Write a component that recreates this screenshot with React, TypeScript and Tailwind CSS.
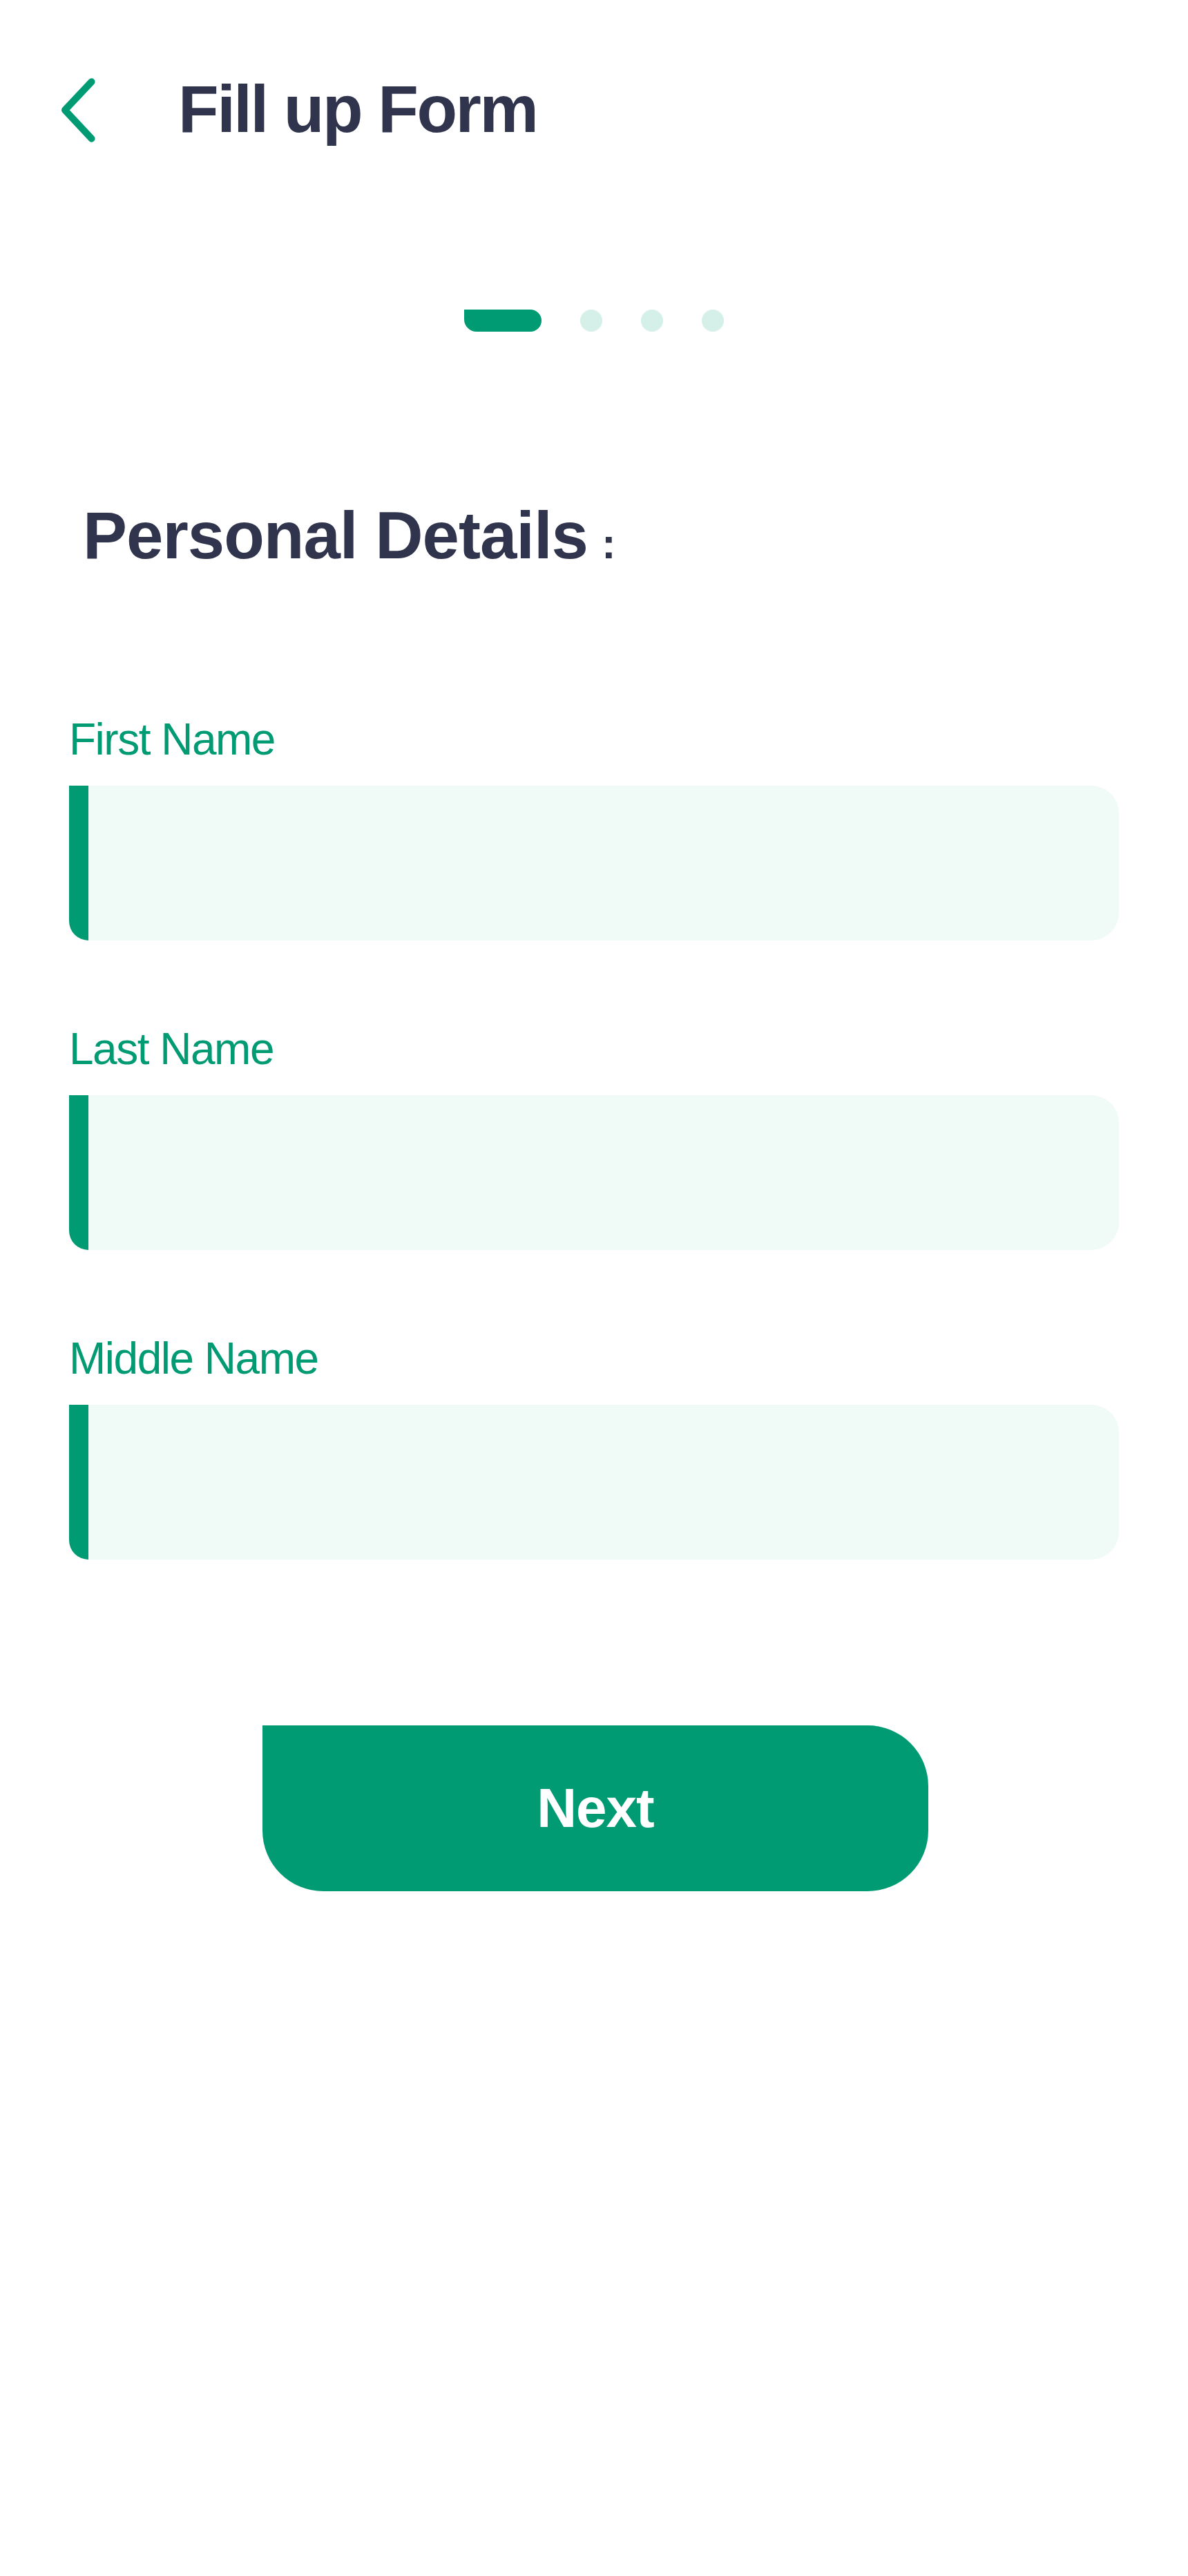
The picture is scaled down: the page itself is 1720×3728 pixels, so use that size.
import React from "react";

// 입력 필드 목록
const fields = ["First Name", "Last Name", "Middle Name"];

const BackIcon = () => (
  <svg width="60" height="96" viewBox="0 0 60 96" fill="none" className="shrink-0">
    <path
      d="M52.6 8.3 L14 49.3 L52.6 90.7"
      stroke="#009B73"
      strokeWidth="10"
      strokeLinecap="round"
      strokeLinejoin="round"
    />
  </svg>
);

const Field = ({ label }: { label: string }) => (
  <div className="flex flex-col">
    <span className="text-[64px] leading-none tracking-[-1.5px] text-[#009B73]">{label}</span>
    <div className="mt-[35px] h-[224px] flex overflow-hidden rounded-r-[40px] rounded-bl-[28px] bg-[#F0FAF6]">
      <div className="w-[28px] h-full bg-[#009B73]" />
      <input className="flex-1 bg-transparent outline-none px-8 text-[56px]" />
    </div>
  </div>
);

export default function App() {
  return (
    <div
      className="min-h-[3728px] w-full bg-white"
      style={{ fontFamily: '"Liberation Sans", Arial, sans-serif' }}
    >
      {/* 헤더 */}
      <div className="flex items-start pt-[110px] pl-[80px]">
        <BackIcon />
        <h1 className="ml-[118px] text-[96px] leading-none font-bold tracking-[-2.5px] text-[#30354D]">
          Fill up Form
        </h1>
      </div>

      {/* 진행 표시 */}
      <div className="mt-[242px] flex justify-center items-center gap-[56px]">
        <div className="w-[112px] h-[32px] bg-[#009B73] rounded-r-[16px] rounded-bl-[18px]" />
        <div className="w-[32px] h-[32px] rounded-full bg-[#D5F0E8]" />
        <div className="w-[32px] h-[32px] rounded-full bg-[#D5F0E8]" />
        <div className="w-[32px] h-[32px] rounded-full bg-[#D5F0E8]" />
      </div>

      {/* 제목 */}
      <h2 className="mt-[247px] pl-[120px] text-[96px] leading-none font-bold tracking-[-1px] text-[#30354D]">
        Personal Details
        <span className="ml-[20px] text-[62px] tracking-normal">:</span>
      </h2>

      {/* 폼 */}
      <div className="mt-[215px] px-[100px] flex flex-col gap-[125px]">
        {fields.map((f) => (
          <Field key={f} label={f} />
        ))}
      </div>

      {/* 버튼 */}
      <div className="mt-[240px] flex justify-center">
        <button className="ml-[4px] w-[964px] h-[240px] bg-[#009B73] rounded-tr-[88px] rounded-br-[88px] rounded-bl-[88px] flex items-center justify-center text-white text-[80px] font-bold tracking-[-1px] leading-none">
          Next
        </button>
      </div>
    </div>
  );
}
